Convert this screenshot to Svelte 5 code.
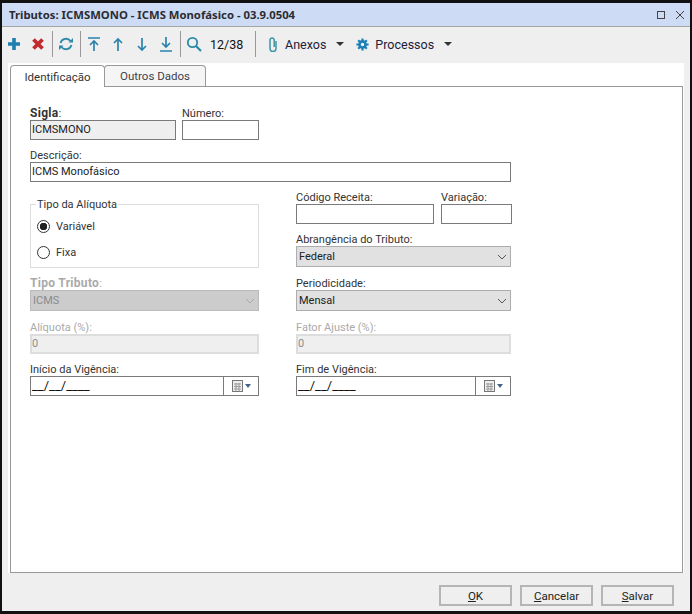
<script>
  const arrows = ['M2 2H14M8 15V5M4 9L8 5L12 9', 'M8 15V3M4 7L8 3L12 7', 'M8 2V14M4 10L8 14L12 10', 'M8 1V11M4 7L8 11L12 7M2 15H14'];
</script>

<div class="window">
  <header class="title">
    <span class="title-text">Tributos: ICMSMONO - ICMS Monofásico - 03.9.0504</span>
    <span class="win-btns">
      <svg width="10" height="10" viewBox="0 0 10 10"><rect x="1.5" y="1.5" width="7" height="7" fill="none" stroke="#444"/></svg>
      <svg width="10" height="10" viewBox="0 0 10 10"><path d="M1 1L9 9M9 1L1 9" stroke="#444" fill="none"/></svg>
    </span>
  </header>
  <nav class="toolbar">
    <svg class="ic" viewBox="0 0 16 16"><path d="M8 2V14M2 8H14" stroke="#1f7fb0" stroke-width="3.600" fill="none"/></svg>
    <svg class="ic x" viewBox="0 0 16 16"><path d="M3.500 3.500L12.500 12.500M12.500 3.500L3.500 12.500" stroke="#c22a2e" stroke-width="3.800" fill="none"/></svg>
    <i class="sep"></i>
    <svg class="ic" viewBox="0 0 16 16"><path d="M2.500 7A5.700 5.700 0 0 1 12.500 5M13.500 9A5.700 5.700 0 0 1 3.500 11" stroke="#2a8aa8" stroke-width="1.800" fill="none"/><path d="M10.500 6.500H15V2ZM5.500 9.500H1V14Z" fill="#2a8aa8"/></svg>
    <i class="sep"></i>
    {#each arrows as d}
      <svg class="ic arrow" viewBox="0 0 16 16"><path {d} stroke="#2b82ad" stroke-width="1.700" fill="none"/></svg>
    {/each}
    <i class="sep"></i>
    <svg class="ic" viewBox="0 0 16 16"><circle cx="6.500" cy="6.500" r="4.700" stroke="#2a8aa8" stroke-width="1.800" fill="none"/><path d="M10 10L15 15" stroke="#2a8aa8" stroke-width="2.200"/></svg>
    <span class="count">12/38</span>
    <i class="sep wide"></i>
    <svg class="clip" viewBox="0 0 10 16"><path d="M8 5V12.500A2.900 2.900 0 0 1 2 12.500V3.500A2.200 2.200 0 0 1 6.200 3.500V11" stroke="#3c94a6" stroke-width="1.500" fill="none"/></svg>
    <span class="menu">Anexos</span><i class="caret"></i>
    <svg class="gear" viewBox="0 0 16 16"><circle cx="8" cy="8" r="3.800" fill="none" stroke="#1a7fb5" stroke-width="3.200"/><path d="M8 0.500V15.500M0.500 8H15.500M2.700 2.700L13.300 13.300M13.300 2.700L2.700 13.300" stroke="#1a7fb5" stroke-width="2.600" stroke-dasharray="3 9 3"/></svg>
    <span class="menu">Processos</span><i class="caret"></i>
  </nav>
  <main class="client">
    <div class="tabs">
      <span class="tab active">Identificação</span>
      <span class="tab other">Outros Dados</span>
    </div>
    <section class="page">
      <div class="row first">
        <label class="f sigla"><span class="lb"><b>Sigla</b>:</span><span class="in ro">ICMSMONO</span></label>
        <label class="f numero"><span class="lb">Número:</span><span class="in"></span></label>
      </div>
      <label class="f desc"><span class="lb">Descrição:</span><span class="in">ICMS Monofásico</span></label>
      <div class="cols">
        <div class="col left">
          <fieldset class="group">
            <legend>Tipo da Alíquota</legend>
            <div class="radio"><i class="dot on"></i>Variável</div>
            <div class="radio"><i class="dot"></i>Fixa</div>
          </fieldset>
          <label class="f gap"><span class="lb dis"><b>Tipo Tributo</b>:</span>
            <span class="sel disabled">ICMS<svg viewBox="0 0 10 6"><path d="M1 1L5 5L9 1" stroke="#aaa" fill="none"/></svg></span></label>
          <label class="f mt"><span class="lb dis">Alíquota (%):</span><span class="in dinp">0</span></label>
          <label class="f gap"><span class="lb">Início da Vigência:</span>
            <span class="in date"><span class="mask">__/__/____</span><span class="cal">
              <svg width="13" height="14" viewBox="0 0 13 14"><rect x="1.500" y="1.500" width="10" height="11" fill="#eee" stroke="#777"/><path d="M3 5H10M3 7.500H10M3 10H10M5 4V12M8 4V12" stroke="#999"/></svg><i class="mini"></i></span></span></label>
        </div>
        <div class="col right">
          <div class="row codes">
            <label class="f codigo"><span class="lb">Código Receita:</span><span class="in"></span></label>
            <label class="f var"><span class="lb">Variação:</span><span class="in"></span></label>
          </div>
          <label class="f gap"><span class="lb">Abrangência do Tributo:</span>
            <span class="sel">Federal<svg viewBox="0 0 10 6"><path d="M1 1L5 5L9 1" stroke="#555" fill="none"/></svg></span></label>
          <label class="f mt"><span class="lb">Periodicidade:</span>
            <span class="sel">Mensal<svg viewBox="0 0 10 6"><path d="M1 1L5 5L9 1" stroke="#555" fill="none"/></svg></span></label>
          <label class="f mt"><span class="lb dis">Fator Ajuste (%):</span><span class="in dinp">0</span></label>
          <label class="f gap"><span class="lb">Fim de Vigência:</span>
            <span class="in date"><span class="mask">__/__/____</span><span class="cal">
              <svg width="13" height="14" viewBox="0 0 13 14"><rect x="1.500" y="1.500" width="10" height="11" fill="#eee" stroke="#777"/><path d="M3 5H10M3 7.500H10M3 10H10M5 4V12M8 4V12" stroke="#999"/></svg><i class="mini"></i></span></span></label>
        </div>
      </div>
    </section>
  </main>
  <footer class="foot">
    <button><u>O</u>K</button>
    <button><u>C</u>ancelar</button>
    <button><u>S</u>alvar</button>
  </footer>
</div>

<style>
  :global(body) { margin: 0; background: #fff; }
  .window {
    width: 692px; height: 614px; box-sizing: border-box;
    border: 2px solid #111; border-top-width: 3px; border-bottom-width: 3px;
    background: #efefef; display: flex; flex-direction: column;
    font-family: Roboto, sans-serif; font-size: 11px; color: #222; overflow: hidden;
  }
  .title {
    height: 24px; box-sizing: border-box; flex: none; background: #cddcf4; border-bottom: 1px solid #a5a5a5;
    display: flex; align-items: center; justify-content: space-between; padding: 0 5px 0 7px;
  }
  .title-text { font-family: "Noto Sans", sans-serif; font-weight: bold; font-size: 11.3px; color: #2b2b33; }
  .win-btns { display: flex; gap: 9px; }
  .win-btns svg { display: block; }
  .toolbar { height: 36px; box-sizing: border-box; flex: none; display: flex; align-items: center; padding: 0 0 2px 4px; }
  .ic { width: 16px; height: 16px; flex: none; }
  .x { margin-left: 8px; }
  .sep { width: 1px; height: 26px; background: #999; margin: 0 5px 0 6px; flex: none; }
  .sep.wide { margin: 0 12px 0 12px; }
  .arrow { margin-right: 8px; }
  .arrow:nth-of-type(7) { margin-right: 0; }
  .count { font-size: 12.5px; margin-left: 8px; color: #111; width: 33px; white-space: nowrap; }
  .clip { width: 10px; height: 16px; flex: none; }
  .menu { font-size: 12.5px; color: #20203a; margin-left: 7px; }
  .caret { width: 0; height: 0; border: 4px solid transparent; border-top: 4px solid #333; border-bottom: 0; margin: 0 12px 0 10px; flex: none; }
  .gear { width: 13px; height: 13px; flex: none; }
  .gear + .menu { margin-left: 6px; }
  .client { flex: 1; background: #fff; margin: 0 6px 0 6px; padding: 2px 1px 0 2px; display: flex; flex-direction: column; min-height: 0; }
  .tabs { display: flex; height: 22px; flex: none; position: relative; z-index: 1; margin-bottom: -1px; font-size: 11.5px; }
  .tab { box-sizing: border-box; height: 21px; border: 1px solid #999; border-bottom: 0; border-radius: 4px 4px 0 0; display: flex; align-items: center; justify-content: center; color: #333; }
  .tab.active { width: 95px; background: #fff; height: 22px; }
  .tab.other { width: 102px; background: #f5f5f5; margin-left: -1px; color: #40404e; }
  .page { flex: 1; box-sizing: border-box; border: 1px solid #999; background: #fff; padding: 19px 0 0 19px; }
  .f { display: flex; flex-direction: column; }
  .lb { height: 13px; line-height: 15px; margin-bottom: 1px; color: #333; white-space: nowrap; }
  .lb b { font-size: 12px; letter-spacing: 0.3px; }
  .lb.dis, .lb.dis b { color: #aaa; }
  .in, .sel { box-sizing: border-box; height: 20px; line-height: 18px; border: 1px solid #7a7a7a; padding: 0 1px; background: #fff; color: #222; display: block; }
  .ro { background: #efefef; }
  .row { display: flex; }
  .first { gap: 6px; }
  .sigla { width: 146px; }
  .numero { width: 77px; }
  .desc { width: 481px; margin-top: 8px; }
  .cols { display: flex; gap: 37px; margin-top: 8px; }
  .col { display: flex; flex-direction: column; }
  .left { width: 229px; }
  .right { width: 215px; }
  .group { box-sizing: border-box; height: 70px; margin: 8px 0 0; padding: 2px 0 0 6px; border: 1px solid #ddd; min-width: 0; }
  .group legend { padding: 0 1px; margin-left: -1px; line-height: 13px; color: #333; }
  .radio { height: 26px; display: flex; align-items: center; gap: 6px; color: #333; }
  .dot { width: 13px; height: 13px; box-sizing: border-box; border: 1px solid #333; border-radius: 50%; flex: none; background: #fff; }
  .dot.on { background: radial-gradient(circle, #222 0 3.500px, #fff 4px); }
  .gap { margin-top: 8px; }
  .mt { margin-top: 9px; }
  .sel { height: 21px; background: #e1e1e1; border-color: #adadad; position: relative; line-height: 19px; padding-left: 2px; }
  .sel svg { position: absolute; right: 3px; top: 7px; width: 10px; height: 6px; }
  .sel.disabled { background: #ccc; border-color: #bbb; color: #8a8a8a; }
  .in.dinp { background: #efefef; border: 2px solid #ddd; padding: 0; line-height: 16px; color: #8d8d8d; }
  .date { display: flex; padding: 0; }
  .mask { flex: 1; padding: 0 1px; color: #111; font-size: 13px; }
  .cal { width: 35px; box-sizing: border-box; border-left: 1px solid #7a7a7a; display: flex; align-items: center; justify-content: center; gap: 1px; }
  .mini { width: 0; height: 0; border: 3.500px solid transparent; border-top: 4px solid #47618a; border-bottom: 0; }
  .codes { gap: 7px; }
  .codigo { width: 138px; flex: none; }
  .var { width: 71px; flex: none; }
  .foot { height: 38px; box-sizing: border-box; flex: none; display: flex; justify-content: flex-end; align-items: flex-start; gap: 8px; padding: 12px 16px 0 0; }
  button { width: 73px; height: 21px; box-sizing: border-box; border: 2px solid #b5b5b5; background: #efefef; font: inherit; font-size: 11.5px; color: #222; padding: 0; }
</style>
